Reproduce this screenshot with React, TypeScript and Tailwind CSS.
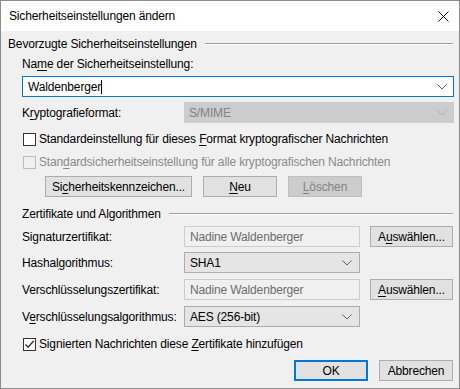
import React from "react";

const Chevron = ({ color = "#606060" }: { color?: string }) => (
    <svg width="10" height="6" viewBox="0 0 10 6" fill="none">
        <path d="M0.5 0.5 L5 5 L9.5 0.5" stroke={color} strokeWidth="1" />
    </svg>
);

const GroupHeader = ({ title, indent }: { title: string; indent: string }) => (
    <div className={`flex items-center h-4 pr-[6px] ${indent}`}>
        <span className="whitespace-nowrap">{title}</span>
        <div className="flex-1 ml-[8px] h-[2px] border-t border-[#a0a0a0] border-b border-b-white" />
    </div>
);

const Button = ({ children, className = "", disabled = false }: { children: React.ReactNode; className?: string; disabled?: boolean }) => (
    <div
        className={`h-[21px] flex items-center justify-center border ${disabled ? "bg-[#cccccc] border-[#bfbfbf] text-[#838383]" : "bg-[#e1e1e1] border-[#adadad]"} ${className}`}
    >
        {children}
    </div>
);

const Checkbox = ({ checked = false, disabled = false }: { checked?: boolean; disabled?: boolean }) => (
    <div
        className={`w-[13px] h-[13px] border flex items-center justify-center ${disabled ? "border-[#bcbcbc] bg-[#f0f0f0]" : "border-[#333333] bg-white"}`}
    >
        {checked && (
            <svg width="11" height="11" viewBox="0 0 11 11" fill="none">
                <path d="M1.5 5.5 L4.2 8.2 L9.6 2" stroke="#222" strokeWidth="1.2" />
            </svg>
        )}
    </div>
);

const DisabledText = ({ value }: { value: string }) => (
    <div className="w-[176px] h-[21px] border border-[#cccccc] bg-[#f0f0f0] flex items-center pl-[5px] text-[#6d6d6d]">
        {value}
    </div>
);

const Dropdown = ({ value }: { value: string }) => (
    <div className="w-[176px] h-[21px] border border-[#acacac] bg-[#e5e5e5] flex items-center justify-between pl-[5px] pr-[7px]">
        <span>{value}</span>
        <Chevron />
    </div>
);

export default function App() {
    return (
        <div className="w-[460px] h-[389px] border border-[#8c8c8c] flex flex-col font-['Liberation_Sans',Arial,sans-serif] text-[12px] leading-4 tracking-[-0.15px] text-black">
            <div className="h-[30px] bg-white flex items-center justify-between pl-[8px] pr-[10px] shrink-0">
                <span>Sicherheitseinstellungen ändern</span>
                <svg width="11" height="11" viewBox="0 0 11 11" fill="none">
                    <path d="M0.5 0.5 L10.5 10.5 M10.5 0.5 L0.5 10.5" stroke="#111" strokeWidth="1" />
                </svg>
            </div>

            <div className="flex-1 bg-[#f0f0f0] pt-[5px] flex flex-col">
                <GroupHeader title="Bevorzugte Sicherheitseinstellungen" indent="pl-[7px]" />

                <div className="pl-[21px] pr-[5px]">
                    <div className="mt-[4px]">
                        Na<u className="underline-offset-2">m</u>e der Sicherheitseinstellung:
                    </div>
                    <div className="mt-[4px] h-[21px] border border-[#0078d7] bg-white flex items-center justify-between pl-[5px] pr-[6px]">
                        <span className="flex items-center">
                            Waldenberger
                            <span className="w-px h-[14px] bg-black" />
                        </span>
                        <Chevron />
                    </div>

                    <div className="mt-[5px] flex items-center">
                        <span className="w-[162px]">
                            K<u className="underline-offset-2">r</u>yptografieformat:
                        </span>
                        <div className="flex-1 h-[21px] bg-[#cccccc] border border-[#cccccc] flex items-center justify-between pl-[4px] pr-[6px] text-[#838383]">
                            <span>S/MIME</span>
                            <Chevron color="#b0b0b0" />
                        </div>
                    </div>

                    <div className="mt-[8px] flex items-center gap-[3px] pl-[1px]">
                        <Checkbox />
                        <span>
                            Standardeinstellung für dieses <u className="underline-offset-2">F</u>ormat kryptografischer Nachrichten
                        </span>
                    </div>
                    <div className="mt-[7px] flex items-center gap-[3px] pl-[1px] text-[#8a8a8a]">
                        <Checkbox disabled />
                        <span>
                            Stan<u className="underline-offset-2">d</u>ardsicherheitseinstellung für alle kryptografischen Nachrichten
                        </span>
                    </div>

                    <div className="mt-[6px] flex gap-[11px] pl-[23px]">
                        <Button className="w-[147px]">
                            <span>
                                Si<u className="underline-offset-2">c</u>herheitskennzeichen...
                            </span>
                        </Button>
                        <Button className="w-[74px]">
                            <u className="underline-offset-2">N</u>eu
                        </Button>
                        <Button className="w-[74px]" disabled>
                            <span>
                                <u className="underline-offset-2">L</u>öschen
                            </span>
                        </Button>
                    </div>
                </div>

                <div className="mt-[9px]">
                    <GroupHeader title="Zertifikate und Algorithmen" indent="pl-[21px]" />
                </div>

                <div className="pl-[21px] pr-[6px] flex flex-col">
                    <div className="mt-[4px] flex items-center">
                        <span className="w-[162px]">Signaturzertifikat:</span>
                        <DisabledText value="Nadine Waldenberger" />
                        <Button className="w-[83px] ml-[10px]">
                            <span>
                                A<u className="underline-offset-2">u</u>swählen...
                            </span>
                        </Button>
                    </div>
                    <div className="mt-[5px] flex items-center">
                        <span className="w-[162px]">
                            Hashal<u className="underline-offset-2">g</u>orithmus:
                        </span>
                        <Dropdown value="SHA1" />
                    </div>
                    <div className="mt-[6px] flex items-center">
                        <span className="w-[162px]">Verschlüsselungszertifikat:</span>
                        <DisabledText value="Nadine Waldenberger" />
                        <Button className="w-[83px] ml-[10px]">
                            <span>
                                <u className="underline-offset-2">A</u>uswählen...
                            </span>
                        </Button>
                    </div>
                    <div className="mt-[6px] flex items-center">
                        <span className="w-[162px]">
                            V<u className="underline-offset-2">e</u>rschlüsselungsalgorithmus:
                        </span>
                        <Dropdown value="AES (256-bit)" />
                    </div>

                    <div className="mt-[9px] flex items-center gap-[3px] pl-[1px]">
                        <Checkbox checked />
                        <span>
                            Signierten Nachrichten diese <u className="underline-offset-2">Z</u>ertifikate hinzufügen
                        </span>
                    </div>

                    <div className="mt-[8px] flex justify-end gap-[11px]">
                        <Button className="w-[74px] !border-2 !border-[#0078d7]">OK</Button>
                        <Button className="w-[74px]">Abbrechen</Button>
                    </div>
                </div>
            </div>
        </div>
    );
}
